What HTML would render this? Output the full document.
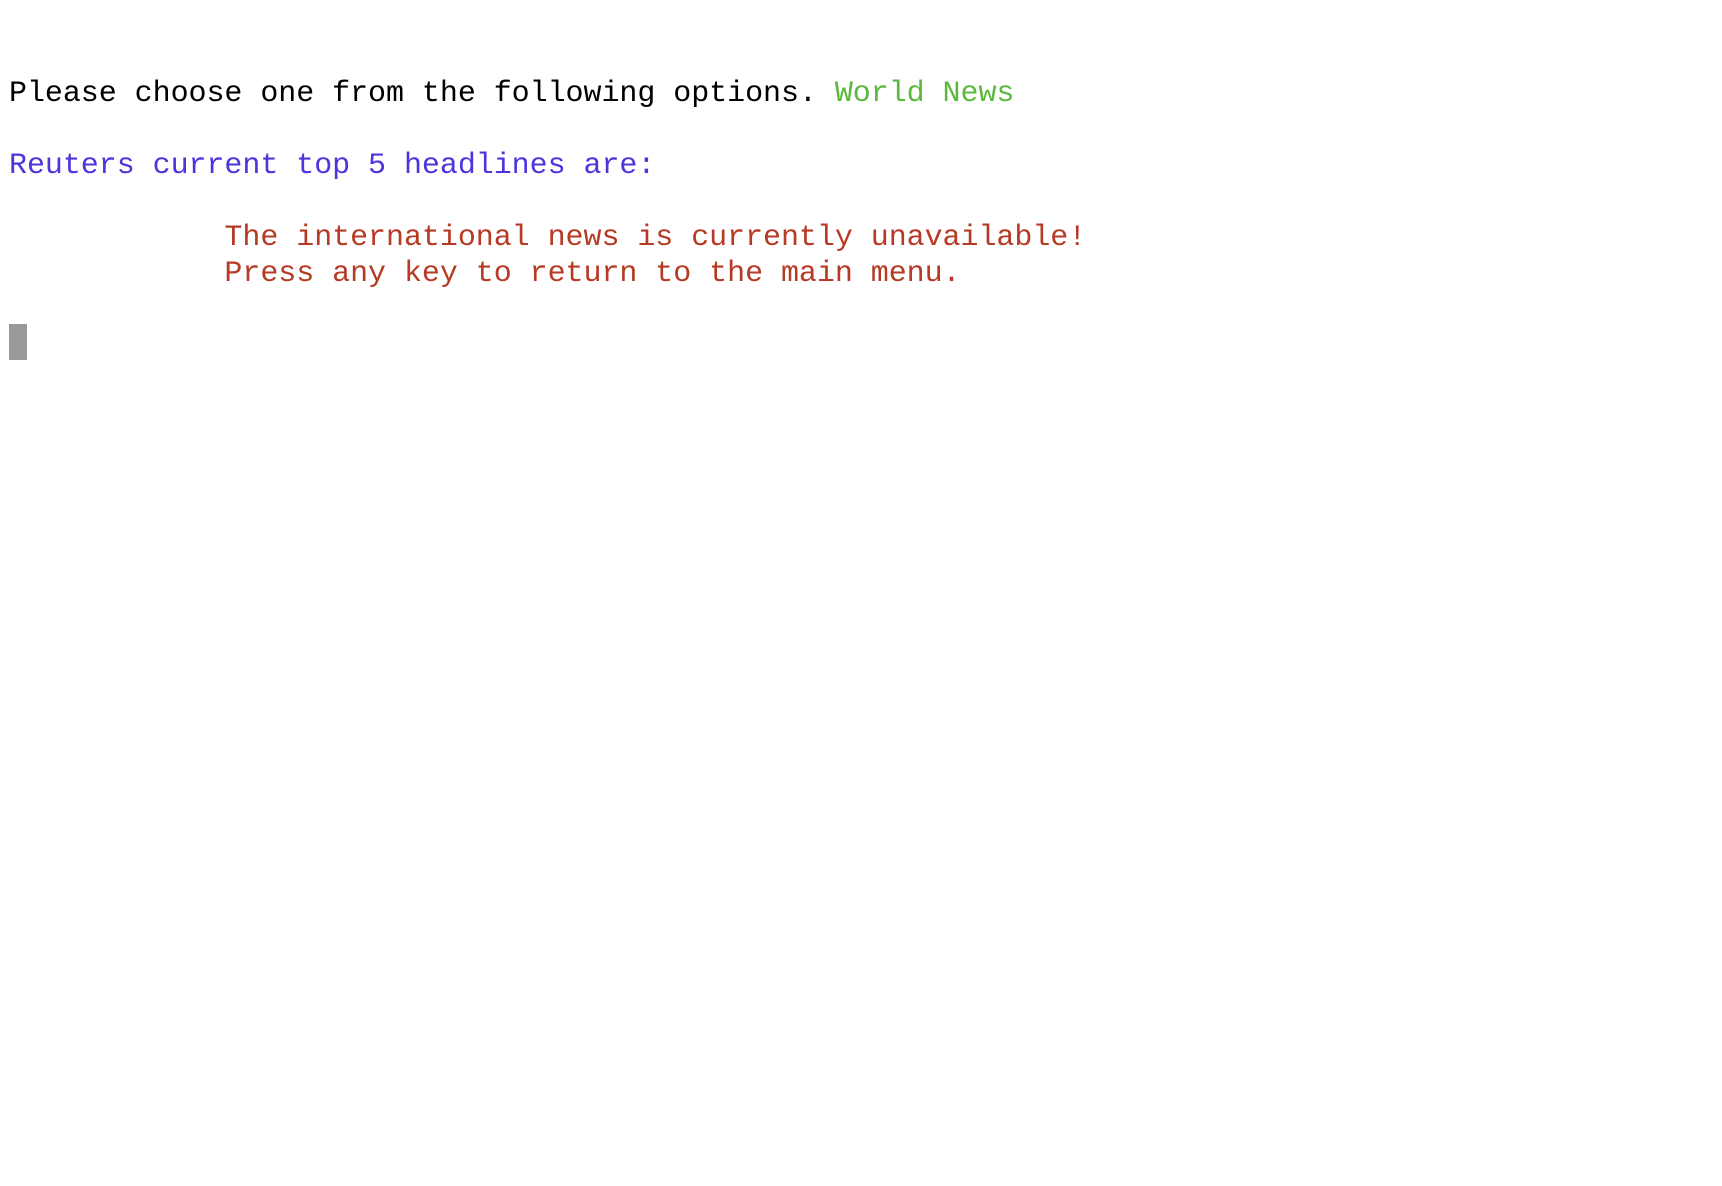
<!DOCTYPE html>
<html><head><meta charset="utf-8"><style>
html,body{margin:0;padding:0;background:#fff;width:1722px;height:1186px;overflow:hidden}
pre{position:absolute;left:9px;top:76px;margin:0;font-family:"Liberation Mono",monospace;font-size:30px;line-height:36px;color:#000;letter-spacing:-0.05px}
.g{color:#5cb83c}.b{color:#4b36de}.r{color:#b63a24}
.c{display:inline-block;width:18px;height:36px;background:#999;vertical-align:top;position:relative;top:-4px}
</style></head><body>
<pre>Please choose one from the following options. <span class="g">World News</span>

<span class="b">Reuters current top 5 headlines are:</span>

<span class="r">            The international news is currently unavailable!
            Press any key to return to the main menu.</span>

<span class="c"></span></pre>
</body></html>
